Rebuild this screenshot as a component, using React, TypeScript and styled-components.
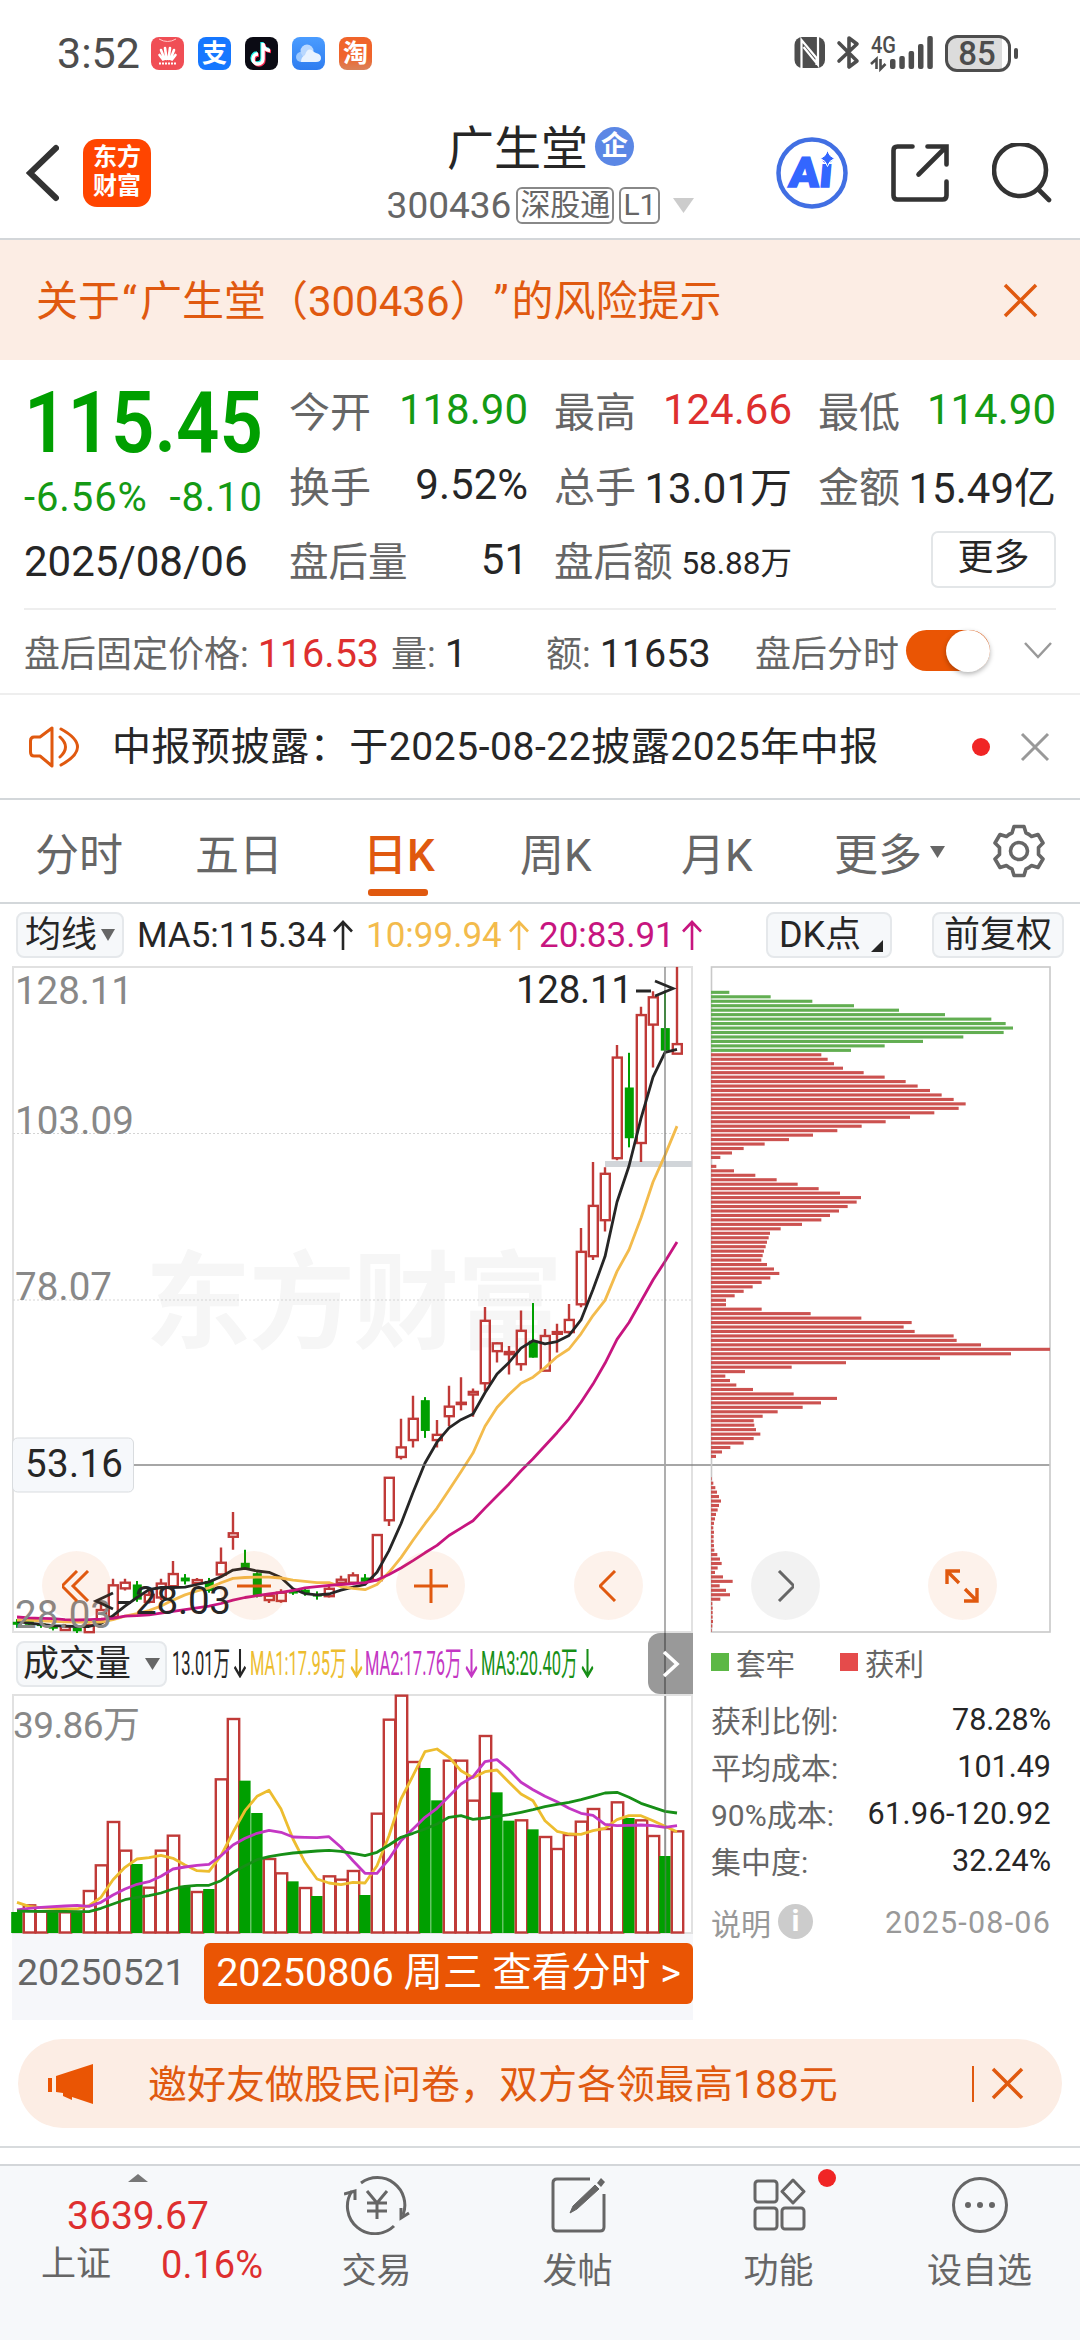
import React from 'react'
import styled, { createGlobalStyle } from 'styled-components'

const ORANGE = '#e0590f'
const RED = '#de2f2f'
const GREEN = '#149a14'

const GlobalStyle = createGlobalStyle`
  * {
    box-sizing: border-box;
  }

  body {
    margin: 0;
    background: #fff;
    color: #262626;
    font-family: Roboto, 'Noto Sans CJK SC', sans-serif;
    text-spacing-trim: space-all;
  }

  svg {
    display: block;
    flex: none;
  }
`

const Page = styled.div`
  width: 1080px;
  height: 2340px;
  display: flex;
  flex-direction: column;
  overflow: hidden;
  white-space: nowrap;
`

/* ---------- 状态栏 ---------- */

const StatusBar = styled.div`
  height: 108px;
  padding: 0 69px 2px 57px;
  display: flex;
  align-items: center;
  justify-content: space-between;
  color: #4d4d4d;
`

const StatusGroup = styled.div<{ $gap: number }>`
  display: flex;
  align-items: center;
  gap: ${(p) => p.$gap}px;
`

const Clock = styled.span`
  width: 80px;
  font-size: 43px;
  line-height: 50px;
`

const AppIcon = styled.span<{ $bg: string }>`
  width: 33px;
  height: 33px;
  border-radius: 8px;
  background: ${(p) => p.$bg};
  color: #fff;
  display: flex;
  align-items: center;
  justify-content: center;
  overflow: hidden;
  font-size: 25px;
  line-height: 33px;
  font-weight: 700;
`

const Battery = styled.span`
  position: relative;
  width: 66px;
  height: 37px;
  margin-left: 9px;
  border: 3px solid #4d4d4d;
  border-radius: 12px;
  background: linear-gradient(to right, #dcdcdc 54px, #fff 54px);
  padding-right: 2px;
  font-size: 33px;
  font-weight: 500;
  line-height: 31px;
  text-align: center;

  &::after {
    content: '';
    position: absolute;
    right: -10px;
    top: 10px;
    width: 4px;
    height: 11px;
    border-radius: 2px;
    background: #4d4d4d;
  }
`

/* ---------- 标题栏 ---------- */

const Header = styled.header`
  height: 132px;
  padding: 0 28px 0 26px;
  border-bottom: 2px solid #d3d6d9;
  display: flex;
  align-items: center;
  justify-content: space-between;
`

const HeaderSide = styled.div<{ $gap: number }>`
  display: flex;
  align-items: center;
  gap: ${(p) => p.$gap}px;
`

const BrandLogo = styled.div`
  width: 68px;
  height: 68px;
  border-radius: 14px;
  background: #ff4500;
  color: #fff;
  font-size: 24px;
  font-weight: 700;
  line-height: 29px;
  text-align: center;
  padding-top: 4px;
`

const TitleBlock = styled.div`
  height: 130px;
  padding-top: 4px;
  margin-left: 154px;
`

const Title = styled.div`
  display: flex;
  justify-content: center;
  align-items: center;
  gap: 7px;
  height: 64px;
  margin-bottom: 4px;
  font-size: 47px;
`

const EntBadge = styled.span`
  width: 39px;
  height: 39px;
  margin-top: 5px;
  border-radius: 50%;
  background: #5b87e5;
  color: #fff;
  font-size: 27px;
  font-weight: 700;
  line-height: 38px;
  text-align: center;
`

const SubTitle = styled.div`
  height: 50px;
  display: flex;
  align-items: center;
  gap: 5px;
  color: #666;
  font-size: 37px;
`

const MarketTag = styled.span`
  height: 37px;
  padding: 0 2px;
  border: 2px solid #888;
  border-radius: 6px;
  font-size: 30px;
  line-height: 32px;
`

/* ---------- 风险提示 ---------- */

const AlertBar = styled.div`
  height: 120px;
  padding: 0 42px 0 36px;
  background: #fcede4;
  color: ${ORANGE};
  font-size: 42px;
  display: flex;
  align-items: center;
  justify-content: space-between;
`

const AlertText = styled.span`
  padding-bottom: 6px;
`

const QuoteMark = styled.span`
  padding: 0 3px 0 2px;
`

/* ---------- 行情 ---------- */

const QuotePanel = styled.section`
  height: 250px;
  margin: 0 24px;
  padding-top: 11px;
  border-bottom: 2px solid #eee;
  display: grid;
  grid-template-columns: 239px 239px 238px 238px;
  column-gap: 26px;
`

const PriceColumn = styled.div`
  display: flex;
  flex-direction: column;
  color: ${GREEN};
`

const Price = styled.div`
  height: 100px;
  padding-top: 4px;
  color: #009f00;
  font-size: 86px;
  font-weight: 600;
  line-height: 96px;
  transform: scaleX(0.885);
  transform-origin: 0 50%;
`

const Change = styled.div`
  height: 54px;
  display: flex;
  justify-content: space-between;
  font-size: 40px;
  line-height: 54px;
  letter-spacing: 0.9px;
`

const TradeDate = styled.div`
  height: 73px;
  color: #262626;
  font-size: 42px;
  line-height: 73px;
`

const QuoteColumn = styled.div`
  display: flex;
  flex-direction: column;
`

const QuoteCell = styled.div<{ $small?: boolean }>`
  height: 75px;
  display: flex;
  align-items: center;
  justify-content: space-between;
  color: #666;
  font-size: ${(p) => (p.$small ? 39.5 : 41)}px;
`

const QuoteValue = styled.span<{ $color?: string; $size?: number }>`
  padding-top: 2px;
  color: ${(p) => p.$color || '#262626'};
  font-size: ${(p) => p.$size || 42}px;
`

const MoreButton = styled.button`
  width: 125px;
  height: 57px;
  margin: 10px 0 0 auto;
  padding: 0 0 4px;
  border: 2px solid #e3e6e8;
  border-radius: 7px;
  background: #fff;
  color: #262626;
  font: inherit;
  font-size: 36px;
  line-height: 48px;
`

const AfterHours = styled.div`
  height: 85px;
  padding: 0 28px 2px 24px;
  border-bottom: 2px solid #eee;
  display: grid;
  grid-template-columns: 367px 155px 209px 151px 1fr auto;
  align-items: center;
  color: #666;
  font-size: 36px;

  em {
    font-style: normal;
    font-size: 39.5px;
    color: #262626;
  }

  em.up {
    color: ${RED};
  }
`

const Toggle = styled.span`
  width: 84px;
  height: 41px;
  border-radius: 21px;
  background: #ea5504;
  display: flex;
  justify-content: flex-end;
  align-items: center;

  &::after {
    content: '';
    width: 44px;
    height: 42px;
    border-radius: 50%;
    background: #fff;
    box-shadow: 0 2px 5px rgba(0, 0, 0, 0.3);
  }
`

/* ---------- 公告 ---------- */

const Notice = styled.div`
  height: 105px;
  padding: 0 30px 0 28px;
  border-bottom: 2px solid #d3d7da;
  display: flex;
  align-items: center;
  font-size: 39px;
`

const NoticeText = styled.span`
  flex: 1;
  margin-left: 30px;
  padding-bottom: 8px;
  letter-spacing: 0.55px;
`

const RedDot = styled.span`
  width: 18px;
  height: 18px;
  border-radius: 50%;
  background: #f02525;
`

/* ---------- 周期切换 ---------- */

const TabBar = styled.nav`
  height: 104px;
  padding: 0 35px;
  border-bottom: 2px solid #d3d7da;
  display: grid;
  grid-template-columns: 160px 168px 157px 161px 153px 1fr auto;
  align-items: center;
  color: #666;
  font-size: 44px;
`

const Tab = styled.span<{ $active?: boolean }>`
  position: relative;
  height: 102px;
  padding-top: 2px;
  display: flex;
  align-items: center;
  gap: 8px;
  ${(p) => p.$active && `color: ${ORANGE}; font-weight: 500;`}

  &::after {
    content: '';
    display: ${(p) => (p.$active ? 'block' : 'none')};
    position: absolute;
    left: 5px;
    bottom: 6px;
    width: 60px;
    height: 7px;
    border-radius: 3px;
    background: ${ORANGE};
  }
`

/* ---------- 图表 ---------- */

const IndicatorRow = styled.div`
  height: 62px;
  padding: 0 16px 0 16px;
  display: flex;
  align-items: center;
  font-size: 35px;
`

const Chip = styled.span<{ $width: number }>`
  width: ${(p) => p.$width}px;
  height: 46px;
  border: 2px solid #e5e8eb;
  border-radius: 8px;
  background: #f6f8fa;
  display: flex;
  align-items: center;
  justify-content: center;
  gap: 4px;
  font-size: 36px;
  line-height: 42px;
`

const CornerMark = styled.svg`
  align-self: flex-end;
  margin: 0 -4px 4px 6px;
`

const MaText = styled.span<{ $color: string; $width: number }>`
  width: ${(p) => p.$width}px;
  color: ${(p) => p.$color};
  display: flex;
  align-items: center;
  gap: 7px;
`

const Spacer = styled.span<{ $size?: number }>`
  flex: ${(p) => (p.$size ? `0 0 ${p.$size}px` : 1)};
`

const ChartArea = styled.section`
  position: relative;
  height: 1054px;
  padding-left: 12px;
  display: grid;
  grid-template-columns: 681px 340px;
  column-gap: 18px;
`

const ChartColumn = styled.div`
  display: flex;
  flex-direction: column;
`

const Plot = styled.svg`
  overflow: visible;
`

const VolumeHeader = styled.div`
  height: 61px;
  padding-left: 4px;
  display: flex;
  align-items: center;
`

const Squeezed = styled.span<{ $color: string; $width: number }>`
  width: ${(p) => p.$width}px;
  color: ${(p) => p.$color};
  font-size: 33px;
  line-height: 50px;
  transform: scaleX(0.5);
  transform-origin: 0 50%;
  display: flex;
  align-items: center;
  gap: 8px;
`

const NextIndicator = styled.span`
  width: 45px;
  height: 61px;
  margin-left: auto;
  border-radius: 12px 0 0 12px;
  background: rgba(0, 0, 0, 0.4);
  display: flex;
  align-items: center;
  justify-content: center;
`

const DateStrip = styled.div`
  height: 86px;
  padding: 9px 0 0 5px;
  background: #f6f7fa;
  display: flex;
  justify-content: space-between;
  color: #666;
  font-size: 37.5px;
  line-height: 59px;
`

const MinuteButton = styled.span`
  width: 489px;
  height: 61px;
  border-radius: 6px;
  background: #ea5504;
  color: #fff;
  font-size: 39.5px;
  line-height: 60px;
  text-align: center;
`

const Legend = styled.div`
  height: 62px;
  padding-bottom: 4px;
  display: flex;
  align-items: center;
  gap: 7px;
  color: #666;
  font-size: 29.5px;
`

const Swatch = styled.span<{ $color: string }>`
  width: 18px;
  height: 18px;
  background: ${(p) => p.$color};
`

const StatRow = styled.div<{ $muted?: boolean; $spacing?: number }>`
  height: 47px;
  margin-top: ${(p) => (p.$muted ? 15 : 0)}px;
  display: flex;
  align-items: center;
  justify-content: space-between;
  color: ${(p) => (p.$muted ? '#999' : '#666')};
  font-size: 30px;

  b {
    margin-top: 2px;
    font-weight: 400;
    font-size: 30.5px;
    letter-spacing: ${(p) => p.$spacing || 0}px;
    color: ${(p) => (p.$muted ? '#999' : '#262626')};
  }
`

const StatLabel = styled.span`
  display: flex;
  align-items: center;
  gap: 7px;
`

const InfoDot = styled.span`
  width: 35px;
  height: 35px;
  border-radius: 50%;
  background: #ccc;
  color: #fff;
  font-size: 30px;
  font-weight: 700;
  line-height: 34px;
  text-align: center;
`

/* 悬浮在图上的操作按钮 */
const ChartActions = styled.div`
  position: absolute;
  left: 42px;
  top: 585px;
  width: 955px;
  display: flex;
  justify-content: space-between;
`

const RoundAction = styled.span<{ $gray?: boolean }>`
  width: 69px;
  height: 69px;
  border-radius: 50%;
  background: ${(p) => (p.$gray ? 'rgba(0, 0, 0, 0.05)' : 'rgba(234, 85, 4, 0.08)')};
  display: flex;
  align-items: center;
  justify-content: center;
`

/* ---------- 底部 ---------- */

const Promo = styled.div`
  height: 89px;
  margin: 19px 18px 18px;
  padding: 0 38px 0 29px;
  border-radius: 45px;
  background: #fcede4;
  color: ${ORANGE};
  font-size: 39px;
  display: flex;
  align-items: center;
`

const PromoText = styled.span`
  flex: 1;
  margin-left: 54px;
  padding-bottom: 6px;
`

const PromoDivider = styled.span`
  width: 2px;
  height: 36px;
  margin-right: 17px;
  background: ${ORANGE};
`

const Gap = styled.div`
  height: 18px;
  border-top: 2px solid #d8dbdd;
`

const BottomNav = styled.footer`
  flex: 1;
  border-top: 2px solid #d3d6d9;
  background: #f6f8fa;
  display: grid;
  grid-template-columns: 276px repeat(4, 201px);
  color: #666;
  font-size: 35px;
`

const IndexCell = styled.div`
  padding-top: 8px;
  display: flex;
  flex-direction: column;
  align-items: center;
  color: ${RED};
`

const IndexValue = styled.div`
  margin-top: 7px;
  font-size: 39px;
  line-height: 54px;
`

const IndexRow = styled.div`
  width: 222px;
  margin-left: 28px;
  display: flex;
  justify-content: space-between;
  font-size: 38px;
  line-height: 44px;

  span {
    color: #666;
    font-size: 35px;
  }
`

const NavItem = styled.div`
  padding-top: 9px;
  display: flex;
  flex-direction: column;
  align-items: center;
  line-height: 50px;
  gap: 12px;
`

const NavIcon = styled.span`
  position: relative;
  display: block;

  ${RedDot} {
    position: absolute;
    right: -30px;
    top: -6px;
  }
`

/* ---------- 数据 ---------- */

type Candle = [up: 0 | 1, high: number, top: number, bottom: number, low: number]

const candles: Candle[] = [
  [0, 1520, 1526, 1533, 1540],
  [0, 1518, 1524, 1533, 1540],
  [0, 1526, 1530, 1536, 1540],
  [0, 1530, 1534, 1542, 1546],
  [1, 1532, 1537, 1545, 1547],
  [0, 1535, 1540, 1548, 1552],
  [1, 1530, 1534, 1550, 1550],
  [1, 1485, 1499, 1525, 1527],
  [1, 1427, 1442, 1515, 1518],
  [1, 1427, 1436, 1449, 1454],
  [0, 1432, 1440, 1475, 1480],
  [1, 1455, 1464, 1480, 1484],
  [1, 1427, 1438, 1470, 1476],
  [1, 1386, 1416, 1444, 1448],
  [0, 1416, 1424, 1433, 1440],
  [1, 1425, 1430, 1437, 1440],
  [0, 1425, 1432, 1455, 1459],
  [1, 1355, 1390, 1417, 1422],
  [1, 1273, 1322, 1330, 1360],
  [0, 1360, 1390, 1402, 1404],
  [0, 1412, 1414, 1468, 1470],
  [1, 1462, 1466, 1476, 1483],
  [1, 1451, 1459, 1478, 1482],
  [0, 1452, 1455, 1461, 1464],
  [0, 1446, 1452, 1460, 1466],
  [0, 1456, 1462, 1468, 1475],
  [1, 1443, 1450, 1467, 1470],
  [1, 1420, 1429, 1436, 1443],
  [1, 1412, 1419, 1436, 1440],
  [0, 1416, 1424, 1434, 1436],
  [1, 1325, 1326, 1430, 1430],
  [1, 1193, 1194, 1292, 1305],
  [1, 1058, 1124, 1146, 1152],
  [1, 1005, 1058, 1107, 1124],
  [0, 1008, 1015, 1086, 1102],
  [1, 1061, 1095, 1107, 1124],
  [1, 982, 1030, 1052, 1075],
  [1, 962, 1021, 1024, 1038],
  [1, 988, 996, 1002, 1053],
  [1, 800, 832, 976, 995],
  [1, 882, 884, 902, 928],
  [1, 890, 904, 909, 956],
  [1, 808, 855, 932, 947],
  [0, 791, 878, 917, 917],
  [1, 851, 867, 947, 947],
  [1, 839, 858, 862, 905],
  [1, 793, 830, 858, 862],
  [1, 618, 673, 794, 801],
  [1, 466, 567, 683, 692],
  [1, 478, 493, 600, 626],
  [1, 196, 225, 457, 462],
  [0, 214, 294, 411, 432],
  [1, 108, 127, 422, 466],
  [1, 72, 86, 149, 248],
  [0, 70, 157, 209, 215],
  [1, 16, 194, 216, 216],
]

const ma5 = [
  1525, 1529, 1532, 1535, 1536, 1537, 1537, 1530, 1512, 1490, 1470, 1452, 1447, 1447, 1446, 1440, 1434,
  1422, 1407, 1403, 1409, 1412, 1424, 1450, 1461, 1464, 1462, 1453, 1446, 1440, 1412, 1362, 1300, 1228,
  1160, 1112, 1079, 1060, 1047, 998, 955, 928, 895, 878, 885, 880, 866, 830, 760, 684, 558, 475, 365,
  270, 213, 206,
]

const ma10 = [
  1522, 1522, 1524, 1525, 1526, 1527, 1527, 1527, 1521, 1513, 1507, 1500, 1490, 1476, 1464, 1455, 1448,
  1436, 1426, 1424, 1423, 1423, 1425, 1430, 1433, 1436, 1436, 1445, 1449, 1452, 1440, 1412, 1378, 1338,
  1300, 1264, 1222, 1180, 1137, 1075, 1032, 1002, 976, 962, 940, 915, 897, 862, 820, 785, 718, 668, 595,
  512, 450, 383,
]

const ma20 = [
  1515, 1517, 1518, 1519, 1521, 1522, 1521, 1520, 1518, 1513, 1512, 1510, 1506, 1502, 1498, 1494, 1490,
  1484, 1476, 1470, 1466, 1462, 1458, 1454, 1448, 1445, 1442, 1440, 1438, 1436, 1430, 1417, 1402, 1385,
  1367, 1350, 1327, 1310, 1293, 1264, 1236, 1208, 1178, 1150, 1120, 1090, 1058, 1020, 978, 930, 875, 836,
  787, 738, 695, 650,
]

const volumes = [
  849, 829, 848, 848, 850, 848, 786, 709, 579, 665, 705, 776, 665, 620, 770, 789, 780, 451, 270, 455, 552,
  690, 733, 757, 777, 801, 742, 752, 726, 798, 554, 272, 200, 399, 417, 514, 395, 395, 515, 321, 490, 575,
  574, 601, 624, 660, 618, 578, 540, 600, 520, 567, 574, 621, 681, 607,
]

// 成交量柱中为阴线的下标
const volumeDown = [0, 3, 5, 10, 14, 16, 19, 20, 23, 25, 29, 34, 35, 40, 41, 43, 51, 54]

const volMa1 = [
  820, 832, 836, 838, 840, 840, 830, 805, 752, 715, 690, 686, 679, 688, 708, 725, 727, 680, 610, 545, 502,
  484, 540, 630, 700, 750, 762, 767, 760, 762, 710, 620, 510, 440, 368, 360, 385, 425, 446, 428, 423, 460,
  495, 515, 575, 607, 615, 616, 605, 598, 572, 560, 560, 575, 592, 608,
]

const volMa2 = [
  843, 838, 835, 833, 831, 829, 832, 820, 798, 780, 766, 758, 742, 720, 714, 709, 706, 680, 648, 628, 613,
  604, 610, 624, 625, 626, 623, 655, 695, 733, 733, 690, 635, 600, 565, 538, 502, 465, 443, 398, 392, 422,
  460, 482, 502, 518, 538, 553, 559, 586, 590, 589, 588, 590, 595, 590,
]

const volMa3 = [
  846, 847, 847, 847, 847, 848, 848, 838, 825, 812, 805, 800, 792, 780, 772, 769, 769, 755, 730, 710, 692,
  683, 677, 672, 669, 666, 664, 667, 673, 680, 670, 648, 625, 613, 600, 585, 565, 560, 571, 567, 562, 557,
  550, 542, 533, 526, 520, 512, 502, 492, 490, 505, 523, 535, 547, 552,
]

const trapped = [55, 179, 304, 429, 564, 702, 841, 884, 906, 878, 757, 636, 521, 420]

const profit = [
  331, 350, 369, 396, 458, 521, 584, 620, 657, 692, 728, 764, 743, 670, 597, 524, 452, 379, 306, 234, 161,
  98, 63, 28, 0, 16, 69, 133, 197, 260, 323, 387, 450, 437, 410, 384, 357, 331, 273, 209, 177, 173, 168,
  164, 159, 155, 151, 168, 189, 205, 178, 152, 125, 98, 71, 45, 45, 152, 299, 451, 602, 578, 611, 728, 737,
  810, 1017, 900, 687, 405, 242, 102, 43, 57, 76, 126, 248, 378, 330, 275, 200, 155, 128, 130, 135, 148,
  128, 98, 58, 33, 15, 0, 0, 0, 0, 2, 7, 13, 18, 24, 30, 24, 20, 15, 12, 9, 7, 9, 8, 8, 9, 10, 19, 27, 32,
  20, 12, 36, 65, 26, 45, 57, 28, 4, 5, 5, 5, 6, 4, 2,
]

const stats = [
  { label: '获利比例:', value: '78.28%' },
  { label: '平均成本:', value: '101.49' },
  { label: '90%成本:', value: '61.96-120.92', spacing: 0.4 },
  { label: '集中度:', value: '32.24%' },
]

const barX = (i: number) => 17 + 12 * i
const priceY = (v: number) => 960 + v / 2.306
const volumeY = (v: number) => 1630 + v / 3

const toPoints = (values: number[], y: (v: number) => number) =>
  values.map((v, i) => `${barX(i)},${y(v).toFixed(1)}`).join(' ')

/* ---------- 图标 ---------- */

const CloseIcon: React.FC<{ size: number; color: string; width?: number }> = ({ size, color, width = 3.5 }) => (
  <svg width={size} height={size} viewBox={`0 0 ${size} ${size}`} stroke={color} strokeWidth={width}>
    <path d={`M2 2L${size - 2} ${size - 2}M${size - 2} 2L2 ${size - 2}`} />
  </svg>
)

const Triangle: React.FC<{ w: number; h: number; color: string; up?: boolean }> = ({ w, h, color, up }) => (
  <svg width={w} height={h} viewBox={`0 0 ${w} ${h}`} fill={color}>
    <path d={up ? `M0 ${h}H${w}L${w / 2} 0z` : `M0 0H${w}L${w / 2} ${h}z`} />
  </svg>
)

const Arrow: React.FC<{ down?: boolean; w?: number; h?: number }> = ({ down, w = 20, h = 30 }) => (
  <svg
    width={w}
    height={h}
    viewBox="0 0 20 30"
    preserveAspectRatio="none"
    fill="none"
    stroke="currentColor"
    strokeWidth={down ? 3.4 : 2.6}
  >
    <path d={down ? 'M10 0V28M1 18.5L10 28L19 18.5' : 'M10 30V2M1 11.5L10 2L19 11.5'} />
  </svg>
)

const StatusIcons = () => (
  <svg width="141" height="50" viewBox="794 29 141 50" fill="#4d4d4d">
    <rect x="794.5" y="38" width="30.5" height="31" rx="8" />
    <path d="M801.5 70V41L816.500 59V66M818 37V66L803.500 48" fill="none" stroke="#fff" strokeWidth="2.2" />
    <path
      d="M839 44l18 18l-8 6V39l8 6l-18 17"
      fill="none"
      stroke="#4d4d4d"
      strokeWidth="3.6"
      strokeLinejoin="round"
      strokeLinecap="round"
    />
    <text x="871" y="53.500" fontSize="23" fontWeight="500" textLength="25" lengthAdjust="spacingAndGlyphs">
      4G
    </text>
    <path d="M871 65l5.500 -5v10M885.500 65l-5 5v-10" fill="none" stroke="#4d4d4d" strokeWidth="2.6" />
    <rect x="890" y="60" width="5.5" height="10" rx="2" />
    <rect x="899.3" y="57" width="5.5" height="13" rx="2" />
    <rect x="908.6" y="52" width="5.5" height="18" rx="2" />
    <rect x="918" y="45" width="5.5" height="25" rx="2" />
    <rect x="927.3" y="37" width="5.5" height="33" rx="2" />
  </svg>
)

const PetalIcon = () => (
  <svg width="33" height="33" viewBox="0 0 33 33" fill="none" stroke="#fff">
    <path d="M8 2q8.500 5 17 0" stroke="#ffc9c9" strokeWidth="1" />
    <g strokeWidth="2.600" strokeLinecap="round">
      <path d="M15.500 22L14 11M17.500 22L19 11M13.500 22L10 13M19.500 22L23 13M12 22.500L8.500 18M21 22.500L24.500 18" />
    </g>
    <path d="M8 26.500h17" strokeWidth="2" strokeDasharray="2 1" />
  </svg>
)

const TikTokIcon = () => (
  <svg width="33" height="33" viewBox="0 0 33 33" fill="none" strokeWidth="3.4">
    <path d="M17 5v16a5 5 0 1 1 -5 -5M17 6q1 6 7 6.500" stroke="#25f4ee" />
    <path d="M19 7v16a5 5 0 1 1 -5 -5M19 8q1 6 7 6.500" stroke="#fe2c55" />
    <path d="M18 6v16a5 5 0 1 1 -5 -5M18 7q1 6 7 6.500" stroke="#fff" />
  </svg>
)

const CloudIcon = () => (
  <svg width="33" height="33" viewBox="0 0 33 33">
    <circle cx="9" cy="20" r="5" fill="#9cc8ff" />
    <circle cx="15" cy="14" r="6.500" fill="#b9d8ff" />
    <path d="M9 25q0 -5 4 -7q3 -9 9 -3l2 1q5 1 5 5t-5 4z" fill="#e9f3ff" />
  </svg>
)

const AiIcon = () => (
  <svg width="72" height="72" viewBox="773 136 72 72">
    <circle cx="809" cy="172" r="33.5" fill="none" stroke="#416fe3" strokeWidth="4.500" />
    <text
      transform="translate(785 186) skewX(-5)"
      fill="#3366ff"
      stroke="#3366ff"
      strokeWidth="1.500"
      fontFamily="Roboto, sans-serif"
      fontSize="42"
      fontWeight="900"
      textLength="43"
      lengthAdjust="spacingAndGlyphs"
    >
      Ai
    </text>
    <path d="M824.500 149.500q1.500 6 7 8q-5.500 2 -7 8q-1.500 -6 -7 -8q5.500 -2 7 -8z" fill="#3366ff" stroke="#fff" />
  </svg>
)

const ShareIcon = () => (
  <svg width="58" height="58" viewBox="887.500 143.500 58 58" fill="none" stroke="#333" strokeWidth="4.600" strokeLinecap="round">
    <path d="M909 146H894Q890 146 890 150V195Q890 199 894 199H939Q943 199 943 195V181" />
    <path d="M924 146H943V164M915 174L942 147" />
  </svg>
)

const SearchIcon = () => (
  <svg width="60" height="60" viewBox="991 142 60 60" fill="none" stroke="#333" strokeWidth="4.600" strokeLinecap="round">
    <circle cx="1019" cy="169" r="26" />
    <path d="M1038 189L1048 199" />
  </svg>
)

const SpeakerIcon = () => (
  <svg width="54" height="44" viewBox="28 724 54 44" fill="none" stroke={ORANGE} strokeWidth="3" strokeLinecap="round" strokeLinejoin="round">
    <path d="M52 727V765L40 755H34Q30.500 755 30.500 751V740Q30.500 736 34 736H40Z" />
    <path d="M60 736q11 10 0 20M61 728q33 18 0 36" />
  </svg>
)

const GearIcon = () => (
  <svg width="52" height="54" viewBox="-26 -27 52 54" fill="none" stroke="#666" strokeWidth="3.600" strokeLinejoin="round">
    <circle r="8.500" />
    <path d="M-5 -24.500H5L7 -18Q10 -17 12.500 -14.500L19 -16.500L24 -8L19.500 -3.500V3.500L24 8L19 16.500L12.500 14.500Q10 17 7 18L5 24.500H-5L-7 18Q-10 17 -12.500 14.500L-19 16.500L-24 8L-19.500 3.500V-3.500L-24 -8L-19 -16.500L-12.500 -14.500Q-10 -17 -7 -18Z" />
  </svg>
)

const HornIcon = () => (
  <svg width="47" height="42" viewBox="47 2062 47 42" fill="#ea5504">
    <path d="M48 2077h4v14h-4zM56 2075L93 2063V2103L72 2096V2099L63 2095V2092L56 2091Z" />
  </svg>
)

const TradeIcon = () => (
  <svg width="66" height="60" viewBox="343 2174 66 60" fill="none" stroke="#666" strokeWidth="3">
    <path d="M360 2182A27.500 27.500 0 0 1 402 2214M393 2225A27.500 27.500 0 0 1 351 2190" />
    <path d="M343 2193L354 2190V2199M408 2212L400 2217V2207" />
    <path d="M366 2190L376 2202L386 2190M376 2202V2218M366 2202H386M366 2210H386" />
  </svg>
)

const PostIcon = () => (
  <svg width="58" height="60" viewBox="548 2174 58 60" fill="none" stroke="#666" strokeWidth="3">
    <path d="M589 2178H556Q552 2178 552 2182V2226Q552 2230 556 2230H599Q603 2230 603 2226V2193" />
    <path d="M569 2212L572 2205L594 2184L598 2188L576 2208Z" fill="#666" strokeWidth="1" />
    <path d="M596 2182L600 2177L604 2181L600 2186Z" fill="#666" stroke="none" />
  </svg>
)

const FunctionIcon = () => (
  <svg width="54" height="60" viewBox="751 2174 54 60" fill="none" stroke="#666" strokeWidth="3">
    <rect x="754" y="2180" width="22" height="21" rx="3" />
    <rect x="754" y="2207" width="22" height="21" rx="3" />
    <rect x="781" y="2207" width="22" height="21" rx="3" />
    <path d="M792 2179L803 2190.500L792 2202L781 2190.500Z" strokeLinejoin="round" />
  </svg>
)

const MoreIcon = () => (
  <svg width="60" height="60" viewBox="-30 -30 60 60" fill="#666">
    <circle r="26.500" fill="none" stroke="#666" strokeWidth="3" />
    <circle cx="-12" r="3" />
    <circle r="3" />
    <circle cx="12" r="3" />
  </svg>
)

/* ---------- 图表 ---------- */

const CandleChart = () => (
  <Plot width="681" height="667" viewBox="12 966 681 667">
    <text
      x="145"
      y="1340"
      fontSize="106"
      fontWeight="700"
      fill="#f6f6f6"
      textLength="418"
      fontFamily="'Noto Sans CJK SC', sans-serif"
    >
      东方财富
    </text>
    <rect x="13" y="967" width="679" height="665" fill="none" stroke="#e1e1e1" strokeWidth="2" />
    <path d="M13 1133.500H692M13 1300H692" stroke="#d4d4d4" strokeDasharray="2 2" />
    <rect x="605" y="1161" width="87" height="6" fill="#d1d5d9" />
    {candles.map(([up, high, top, bottom, low], i) => {
      const x = barX(i)
      const t = priceY(top)
      const h = Math.max(priceY(bottom) - t, 1)
      return up ? (
        <g key={i} stroke="#c03a38" strokeWidth="2.4" fill="none">
          <path d={`M${x} ${priceY(high)}V${t}M${x} ${t + h}V${priceY(low)}`} />
          <rect x={x - 4.2} y={t} width="9" height={h} />
        </g>
      ) : (
        <g key={i} fill="#009f00">
          <rect x={x - 1} y={priceY(high)} width="2" height={priceY(low) - priceY(high)} />
          <rect x={x - 4.2} y={t} width="9" height={h} />
        </g>
      )
    })}
    <g fill="none" strokeWidth="2.800" strokeLinejoin="round">
      <polyline points={toPoints(ma5, priceY)} stroke="#262626" />
      <polyline points={toPoints(ma10, priceY)} stroke="#f3bb4c" />
      <polyline points={toPoints(ma20, priceY)} stroke="#c7157f" />
    </g>
    <path d="M13 1465H1050M665 967V1934" stroke="#777" strokeOpacity="0.65" strokeWidth="1.800" />
    <g fontSize="38.5" fill="#888">
      <text x="15" y="1004" textLength="118">128.11</text>
      <text x="15" y="1134" textLength="119">103.09</text>
      <text x="15" y="1299.500" textLength="97">78.07</text>
      <text x="15" y="1628" textLength="97">28.03</text>
    </g>
    <rect x="12.500" y="1438" width="121" height="54" rx="5" fill="#f6f8fb" stroke="#d9dcdf" />
    <g fontSize="38.5" fill="#262626">
      <text x="25" y="1477" textLength="98">53.16</text>
      <text x="516" y="1002.500" textLength="117">128.11</text>
      <text x="135" y="1613.500" textLength="96">28.03</text>
    </g>
    <g fill="none" stroke="#262626" strokeWidth="2.800">
      <path d="M636 991H651M655 981L673 988.500L655 996" />
      <path d="M118 1602.500H131M113 1593L96 1601L113 1609" />
    </g>
  </Plot>
)

const ChipDistribution = () => (
  <Plot width="340" height="667" viewBox="711 966 340 667">
    <rect x="711.500" y="967" width="338.500" height="665" fill="none" stroke="#c9c9c9" strokeWidth="1.600" />
    {[...trapped, ...profit].map((v, i) => (
      <rect
        key={i}
        x="711"
        y={priceY(71 + 10.29 * i)}
        width={v / 3}
        height="3.1"
        fill={i < trapped.length ? '#62ae52' : '#cc5250'}
      />
    ))}
  </Plot>
)

const VolumeChart = () => (
  <Plot width="681" height="240" viewBox="12 1695 681 240">
    <rect x="13" y="1696" width="679" height="238" fill="none" stroke="#e1e1e1" strokeWidth="2" />
    {volumes.map((v, i) => {
      const y = volumeY(v)
      return volumeDown.includes(i) ? (
        <rect key={i} x={barX(i) - 5.8} y={y} width="11.400" height={1934 - y} fill="#009f00" />
      ) : (
        <rect key={i} x={barX(i) - 5.2} y={y} width="11.400" height={1933.5 - y} fill="#fff" stroke="#c03a38" strokeWidth="2.4" />
      )
    })}
    <g fill="none" strokeWidth="2.800" strokeLinejoin="round">
      <polyline points={toPoints(volMa1, volumeY)} stroke="#edbd2f" />
      <polyline points={toPoints(volMa2, volumeY)} stroke="#c437c4" />
      <polyline points={toPoints(volMa3, volumeY)} stroke="#178f17" />
    </g>
    <text x="13" y="1739" fontSize="37" fill="#888" textLength="127">
      39.86万
    </text>
    {volumes.map((_, i) =>
      i > 14 ? <rect key={i} x={barX(i)} y="1937" width="2.400" height="4" fill={i < 20 ? '#bbb' : '#888'} /> : null
    )}
    <path d="M665.500 1697V1934" stroke="#777" strokeOpacity="0.5" strokeWidth="1.600" />
  </Plot>
)

export default function App() {
  return (
    <Page>
      <GlobalStyle />

      <StatusBar>
        <StatusGroup $gap={14}>
          <Clock>3:52</Clock>
          <AppIcon $bg="#f04e55">
            <PetalIcon />
          </AppIcon>
          <AppIcon $bg="#1677ff">支</AppIcon>
          <AppIcon $bg="#0b0b14">
            <TikTokIcon />
          </AppIcon>
          <AppIcon $bg="linear-gradient(#4a9cff, #2f7df0)">
            <CloudIcon />
          </AppIcon>
          <AppIcon $bg="linear-gradient(#f0642a 60%, #d9825a)">淘</AppIcon>
        </StatusGroup>
        <StatusGroup $gap={1}>
          <StatusIcons />
          <Battery>85</Battery>
        </StatusGroup>
      </StatusBar>

      <Header>
        <HeaderSide $gap={24}>
          <svg width="33" height="58" viewBox="26 143 33 58" fill="none" stroke="#333" strokeWidth="6" strokeLinecap="round">
            <path d="M56 147L30 172L56 197" />
          </svg>
          <BrandLogo>
            东方
            <br />
            财富
          </BrandLogo>
        </HeaderSide>
        <TitleBlock>
          <Title>
            广生堂<EntBadge>企</EntBadge>
          </Title>
          <SubTitle>
            300436
            <MarketTag>深股通</MarketTag>
            <MarketTag>L1</MarketTag>
            <Spacer $size={3} />
            <Triangle w={21} h={15} color="#ccc" />
          </SubTitle>
        </TitleBlock>
        <HeaderSide $gap={43}>
          <AiIcon />
          <ShareIcon />
          <SearchIcon />
        </HeaderSide>
      </Header>

      <AlertBar>
        <AlertText>
          关于<QuoteMark>“</QuoteMark>广生堂（300436）<QuoteMark>”</QuoteMark>的风险提示
        </AlertText>
        <CloseIcon size={35} color={ORANGE} />
      </AlertBar>

      <QuotePanel>
        <PriceColumn>
          <Price>115.45</Price>
          <Change>
            <span>-6.56%</span>
            <span>-8.10</span>
          </Change>
          <TradeDate>2025/08/06</TradeDate>
        </PriceColumn>
        <QuoteColumn>
          <QuoteCell>
            今开<QuoteValue $color={GREEN}>118.90</QuoteValue>
          </QuoteCell>
          <QuoteCell>
            换手<QuoteValue>9.52%</QuoteValue>
          </QuoteCell>
          <QuoteCell $small>
            盘后量<QuoteValue>51</QuoteValue>
          </QuoteCell>
        </QuoteColumn>
        <QuoteColumn>
          <QuoteCell>
            最高<QuoteValue $color={RED}>124.66</QuoteValue>
          </QuoteCell>
          <QuoteCell>
            总手<QuoteValue>13.01万</QuoteValue>
          </QuoteCell>
          <QuoteCell $small>
            盘后额<QuoteValue $size={31.5}>58.88万</QuoteValue>
          </QuoteCell>
        </QuoteColumn>
        <QuoteColumn>
          <QuoteCell>
            最低<QuoteValue $color={GREEN}>114.90</QuoteValue>
          </QuoteCell>
          <QuoteCell>
            金额<QuoteValue>15.49亿</QuoteValue>
          </QuoteCell>
          <MoreButton>更多</MoreButton>
        </QuoteColumn>
      </QuotePanel>

      <AfterHours>
        <span>
          盘后固定价格: <em className="up">116.53</em>
        </span>
        <span>
          量: <em>1</em>
        </span>
        <span>
          额: <em>11653</em>
        </span>
        <span>盘后分时</span>
        <Toggle />
        <svg width="28" height="18" viewBox="0 0 28 18" fill="none" stroke="#999" strokeWidth="2.500">
          <path d="M1 1L14 15L27 1" />
        </svg>
      </AfterHours>

      <Notice>
        <SpeakerIcon />
        <NoticeText>中报预披露：于2025-08-22披露2025年中报</NoticeText>
        <RedDot />
        <Spacer $size={30} />
        <CloseIcon size={30} color="#999" width={3} />
      </Notice>

      <TabBar>
        <Tab>分时</Tab>
        <Tab>五日</Tab>
        <Tab $active>日K</Tab>
        <Tab>周K</Tab>
        <Tab>月K</Tab>
        <Tab>
          更多
          <Triangle w={15} h={12} color="#666" />
        </Tab>
        <GearIcon />
      </TabBar>

      <IndicatorRow>
        <Chip $width={108}>
          均线
          <Triangle w={14} h={12} color="#666" />
        </Chip>
        <Spacer $size={13} />
        <MaText $color="#262626" $width={229}>
          MA5:115.34
          <Arrow />
        </MaText>
        <MaText $color="#f3bb4c" $width={173}>
          10:99.94
          <Arrow />
        </MaText>
        <MaText $color="#c7157f" $width={170}>
          20:83.91
          <Arrow />
        </MaText>
        <Spacer />
        <Chip $width={126}>
          DK点
          <CornerMark width="12" height="12" viewBox="0 0 12 12" fill="#262626">
            <path d="M12 0V12H0z" />
          </CornerMark>
        </Chip>
        <Spacer $size={40} />
        <Chip $width={132}>前复权</Chip>
      </IndicatorRow>

      <ChartArea>
        <ChartColumn>
          <CandleChart />
          <VolumeHeader>
            <Chip $width={151}>
              成交量
              <Spacer $size={6} />
              <Triangle w={15} h={12} color="#666" />
            </Chip>
            <Spacer $size={5} />
            <Squeezed $color="#262626" $width={78}>
              13.01万
              <Arrow down w={24} h={29} />
            </Squeezed>
            <Squeezed $color="#edbd2f" $width={115}>
              MA1:17.95万
              <Arrow down w={24} h={29} />
            </Squeezed>
            <Squeezed $color="#c437c4" $width={116}>
              MA2:17.76万
              <Arrow down w={24} h={29} />
            </Squeezed>
            <Squeezed $color="#178f17" $width={108}>
              MA3:20.40万
              <Arrow down w={24} h={29} />
            </Squeezed>
            <NextIndicator>
              <svg width="18" height="28" viewBox="0 0 18 28" fill="none" stroke="#fff" strokeWidth="3.600">
                <path d="M2 2L15 14L2 26" />
              </svg>
            </NextIndicator>
          </VolumeHeader>
          <VolumeChart />
          <DateStrip>
            20250521
            <MinuteButton>20250806 周三 查看分时 &gt;</MinuteButton>
          </DateStrip>
        </ChartColumn>

        <ChartColumn>
          <ChipDistribution />
          <Legend>
            <Swatch $color="#5cb845" />
            套牢
            <Spacer $size={31} />
            <Swatch $color="#e54b4b" />
            获利
          </Legend>
          {stats.map((s) => (
            <StatRow key={s.label} $spacing={s.spacing}>
              {s.label}
              <b>{s.value}</b>
            </StatRow>
          ))}
          <StatRow $muted $spacing={1.2}>
            <StatLabel>
              说明<InfoDot>i</InfoDot>
            </StatLabel>
            <b>2025-08-06</b>
          </StatRow>
        </ChartColumn>

        <ChartActions>
          <RoundAction>
            <svg width="30" height="32" viewBox="3 0 30 32" fill="none" stroke={ORANGE} strokeWidth="3">
              <path d="M18 1L3 16L18 31M29 1L14 16L29 31" />
            </svg>
          </RoundAction>
          <RoundAction>
            <svg width="34" height="34" viewBox="0 0 34 34" stroke={ORANGE} strokeWidth="3">
              <path d="M0 17H34" />
            </svg>
          </RoundAction>
          <RoundAction>
            <svg width="34" height="34" viewBox="0 0 34 34" stroke={ORANGE} strokeWidth="3">
              <path d="M0 17H34M17 0V34" />
            </svg>
          </RoundAction>
          <RoundAction>
            <svg width="18" height="32" viewBox="1 0 18 32" fill="none" stroke={ORANGE} strokeWidth="3">
              <path d="M17 1L2 16L17 31" />
            </svg>
          </RoundAction>
          <RoundAction $gray>
            <svg width="18" height="32" viewBox="-2 0 18 32" fill="none" stroke="#666" strokeWidth="3">
              <path d="M1 1L16 16L1 31" />
            </svg>
          </RoundAction>
          <RoundAction>
            <svg width="34" height="34" viewBox="0 0 34 34" fill="none" stroke={ORANGE} strokeWidth="3.400">
              <path d="M2 15V2H15M2 2L14 14M32 19V32H19M32 32L20 20" />
            </svg>
          </RoundAction>
        </ChartActions>
      </ChartArea>

      <Promo>
        <HornIcon />
        <PromoText>邀好友做股民问卷，双方各领最高188元</PromoText>
        <PromoDivider />
        <CloseIcon size={33} color={ORANGE} />
      </Promo>

      <Gap />

      <BottomNav>
        <IndexCell>
          <Triangle w={20} h={8} color="#777" up />
          <IndexValue>3639.67</IndexValue>
          <IndexRow>
            <span>上证</span>
            0.16%
          </IndexRow>
        </IndexCell>
        <NavItem>
          <TradeIcon />
          交易
        </NavItem>
        <NavItem>
          <PostIcon />
          发帖
        </NavItem>
        <NavItem>
          <NavIcon>
            <FunctionIcon />
            <RedDot />
          </NavIcon>
          功能
        </NavItem>
        <NavItem>
          <MoreIcon />
          设自选
        </NavItem>
      </BottomNav>
    </Page>
  )
}
